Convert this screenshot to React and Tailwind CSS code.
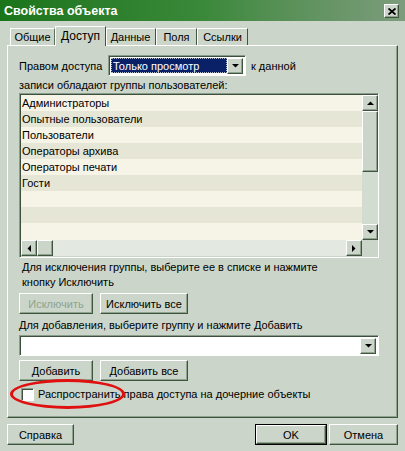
import React from "react";

const raised =
  "border border-t-white border-l-white border-r-[#3f553f] border-b-[#3f553f] shadow-[inset_-1px_-1px_0_#8fa38f]";
const sunken =
  "border border-t-[#8a9c8a] border-l-[#8a9c8a] border-r-white border-b-white shadow-[inset_1px_1px_0_#3d4f3d]";

function Btn({ children, className = "", disabled = false }) {
  return (
    <div
      className={`flex items-center justify-center bg-[#cbd5c9] ${raised} ${className} ${
        disabled ? "text-[#8fa48f]" : "text-black"
      }`}
    >
      {children}
    </div>
  );
}

function Arrow({ dir }) {
  const pts = {
    up: "0,4 7,4 3.5,0.5",
    down: "0,0 7,0 3.5,3.5",
    left: "4,0 4,7 0.5,3.5",
    right: "0,0 0,7 3.5,3.5",
  }[dir];
  const w = dir === "up" || dir === "down" ? 7 : 4;
  const h = dir === "up" || dir === "down" ? 4 : 7;
  return (
    <svg width={w} height={h} viewBox={`0 0 ${w} ${h}`}>
      <polygon points={pts} fill="#000" />
    </svg>
  );
}

function SBtn({ dir, className = "" }) {
  return (
    <div
      className={`w-[16px] h-[16px] flex items-center justify-center bg-[#cbd5c9] ${raised} ${className}`}
    >
      <Arrow dir={dir} />
    </div>
  );
}

const groups = [
  "Администраторы",
  "Опытные пользователи",
  "Пользователи",
  "Операторы архива",
  "Операторы печати",
  "Гости",
  "",
  "",
  "",
];

export default function App() {
  return (
    <div
      className="w-[405px] h-[451px] bg-[#cbd5c9] relative overflow-hidden text-[11px] leading-[14px] text-black"
      style={{ fontFamily: '"Liberation Sans", Arial, sans-serif' }}
    >
      {/* Title bar */}
      <div className="h-[21px] flex items-center justify-between pl-[4px] pr-[6px] bg-gradient-to-r from-[#1a751a] via-[#3a883a] to-[#7d9c7d]">
        <span className="text-white font-bold text-[12.5px] leading-[16px]">
          Свойства объекта
        </span>
        <div
          className={`w-[15px] h-[14px] mt-[1px] flex items-center justify-center bg-[#cbd5c9] ${raised}`}
        >
          <svg width="8" height="7" viewBox="0 0 8 7">
            <path d="M0.5 0.5 L7.5 6.5 M7.5 0.5 L0.5 6.5" stroke="#000" strokeWidth="1.8" />
          </svg>
        </div>
      </div>

      {/* Tabs */}
      <div className="flex items-end pl-[10px] mt-[5px] h-[19px]">
        <div className="w-[45px] h-[17px] flex items-center justify-center border-t border-l border-t-white border-l-white border-r border-r-[#5b715b]">
          Общие
        </div>
        <div className="w-[51px] h-[20px] -mb-[1px] relative z-10 bg-[#cbd5c9] flex items-start pt-[2px] justify-center border-t border-l border-t-white border-l-white border-r border-r-[#3f553f] text-[12px]">
          Доступ
        </div>
        <div className="w-[50px] h-[17px] flex items-center justify-center border-t border-t-white border-r border-r-[#3f553f] shadow-[inset_1px_0_0_#ffffff]">
          Данные
        </div>
        <div className="w-[41px] h-[17px] flex items-center justify-center border-t border-l border-t-white border-l-white border-r border-r-[#3f553f]">
          Поля
        </div>
        <div className="w-[51px] h-[17px] flex items-center justify-center border-t border-l border-t-white border-l-white border-r border-r-[#3f553f]">
          Ссылки
        </div>
      </div>

      {/* Panel */}
      <div className="ml-[7px] w-[391px] h-[373px] border border-t-white border-l-white border-r-[#3f553f] border-b-[#3f553f] shadow-[inset_-1px_-1px_0_#8fa38f] pl-[11px] pt-[9px]">
        {/* row 1 */}
        <div className="flex items-center h-[21px]">
          <span className="w-[89px]">Правом доступа</span>
          <div className={`w-[138px] h-[21px] bg-white flex ${sunken} p-[2px]`}>
            <div className="flex-1 bg-[#0b2167] text-white flex items-center pl-[2px] outline outline-1 outline-dotted outline-[#b0b8d0] -outline-offset-1">
              Только просмотр
            </div>
            <SBtn dir="down" className="h-[15px] w-[15px]" />
          </div>
          <span className="ml-[5px]">к данной</span>
        </div>
        <div className="h-[17px] flex items-center">записи обладают группы пользователей:</div>

        {/* List box */}
        <div className={`w-[360px] h-[165px] ${sunken} bg-[#cbd5c9] flex flex-col`}>
          <div className="flex pl-[1px] pt-[1px]">
            <div className="w-[341px] flex flex-col">
              {groups.map((g, i) => (
                <div
                  key={i}
                  className={`h-[16px] flex items-center pl-[1px] ${
                    i % 2 === 0 ? "bg-[#f6f3e7]" : "bg-[#e5e6d6]"
                  }`}
                >
                  {g}
                </div>
              ))}
              <div className="h-[1px] bg-[#f6f3e7]" />
            </div>
            <div className="w-[16px] flex flex-col bg-[#d3dcd0]">
              <SBtn dir="up" />
              <div className={`w-[16px] h-[61px] bg-[#cbd5c9] ${raised}`} />
              <div className="flex-1" />
              <SBtn dir="down" />
            </div>
          </div>
          <div className="flex pl-[1px]">
            <div className="w-[341px] h-[16px] flex bg-[#e3e9e0]">
              <SBtn dir="left" />
              <div className={`w-[16px] h-[16px] bg-[#cbd5c9] ${raised}`} />
              <div className="flex-1" />
              <SBtn dir="right" />
            </div>
            <div className="w-[16px] h-[16px] bg-[#cbd5c9]" />
          </div>
        </div>

        <div className="pl-[3px] mt-[2px] leading-[15px]">
          <div>Для исключения группы, выберите ее в списке и нажмите</div>
          <div>кнопку Исключить</div>
        </div>
        <div className="flex gap-[7px] mt-[3px]">
          <Btn className="w-[74px] h-[21px]" disabled>
            Исключить
          </Btn>
          <Btn className="w-[88px] h-[21px]">Исключить все</Btn>
        </div>
        <div className="h-[15px] mt-[3px] flex items-center">
          Для добавления, выберите группу и нажмите Добавить
        </div>
        <div className={`w-[360px] h-[21px] mt-[3px] bg-white flex justify-end ${sunken} p-[2px]`}>
          <SBtn dir="down" className="h-[15px]" />
        </div>
        <div className="flex gap-[7px] mt-[4px]">
          <Btn className="w-[74px] h-[21px]">Добавить</Btn>
          <Btn className="w-[88px] h-[21px]">Добавить все</Btn>
        </div>
        <div className="flex items-center mt-[6px] pl-[2px] h-[14px]">
          <div className="w-[13px] h-[13px] bg-white border border-t-[#8a9c8a] border-l-[#8a9c8a] border-r-white border-b-white shadow-[inset_1px_1px_0_#3d4f3d]" />
          <span className="ml-[4px]">Распространить права доступа на дочерние объекты</span>
        </div>
      </div>

      {/* Bottom buttons */}
      <div className="flex items-center mt-[6px] px-[7px]">
        <Btn className="w-[67px] h-[21px]">Справка</Btn>
        <div className="flex-1" />
        <div className="w-[72px] h-[21px] border border-black">
          <Btn className="w-full h-full">OK</Btn>
        </div>
        <Btn className="w-[69px] h-[21px] ml-[2px]">Отмена</Btn>
      </div>

      {/* Red highlight ellipse */}
      <div className="absolute left-[10px] top-[379px] w-[115px] h-[30px] rounded-[50%] border-[3px] border-[#e01010] pointer-events-none" />
    </div>
  );
}
